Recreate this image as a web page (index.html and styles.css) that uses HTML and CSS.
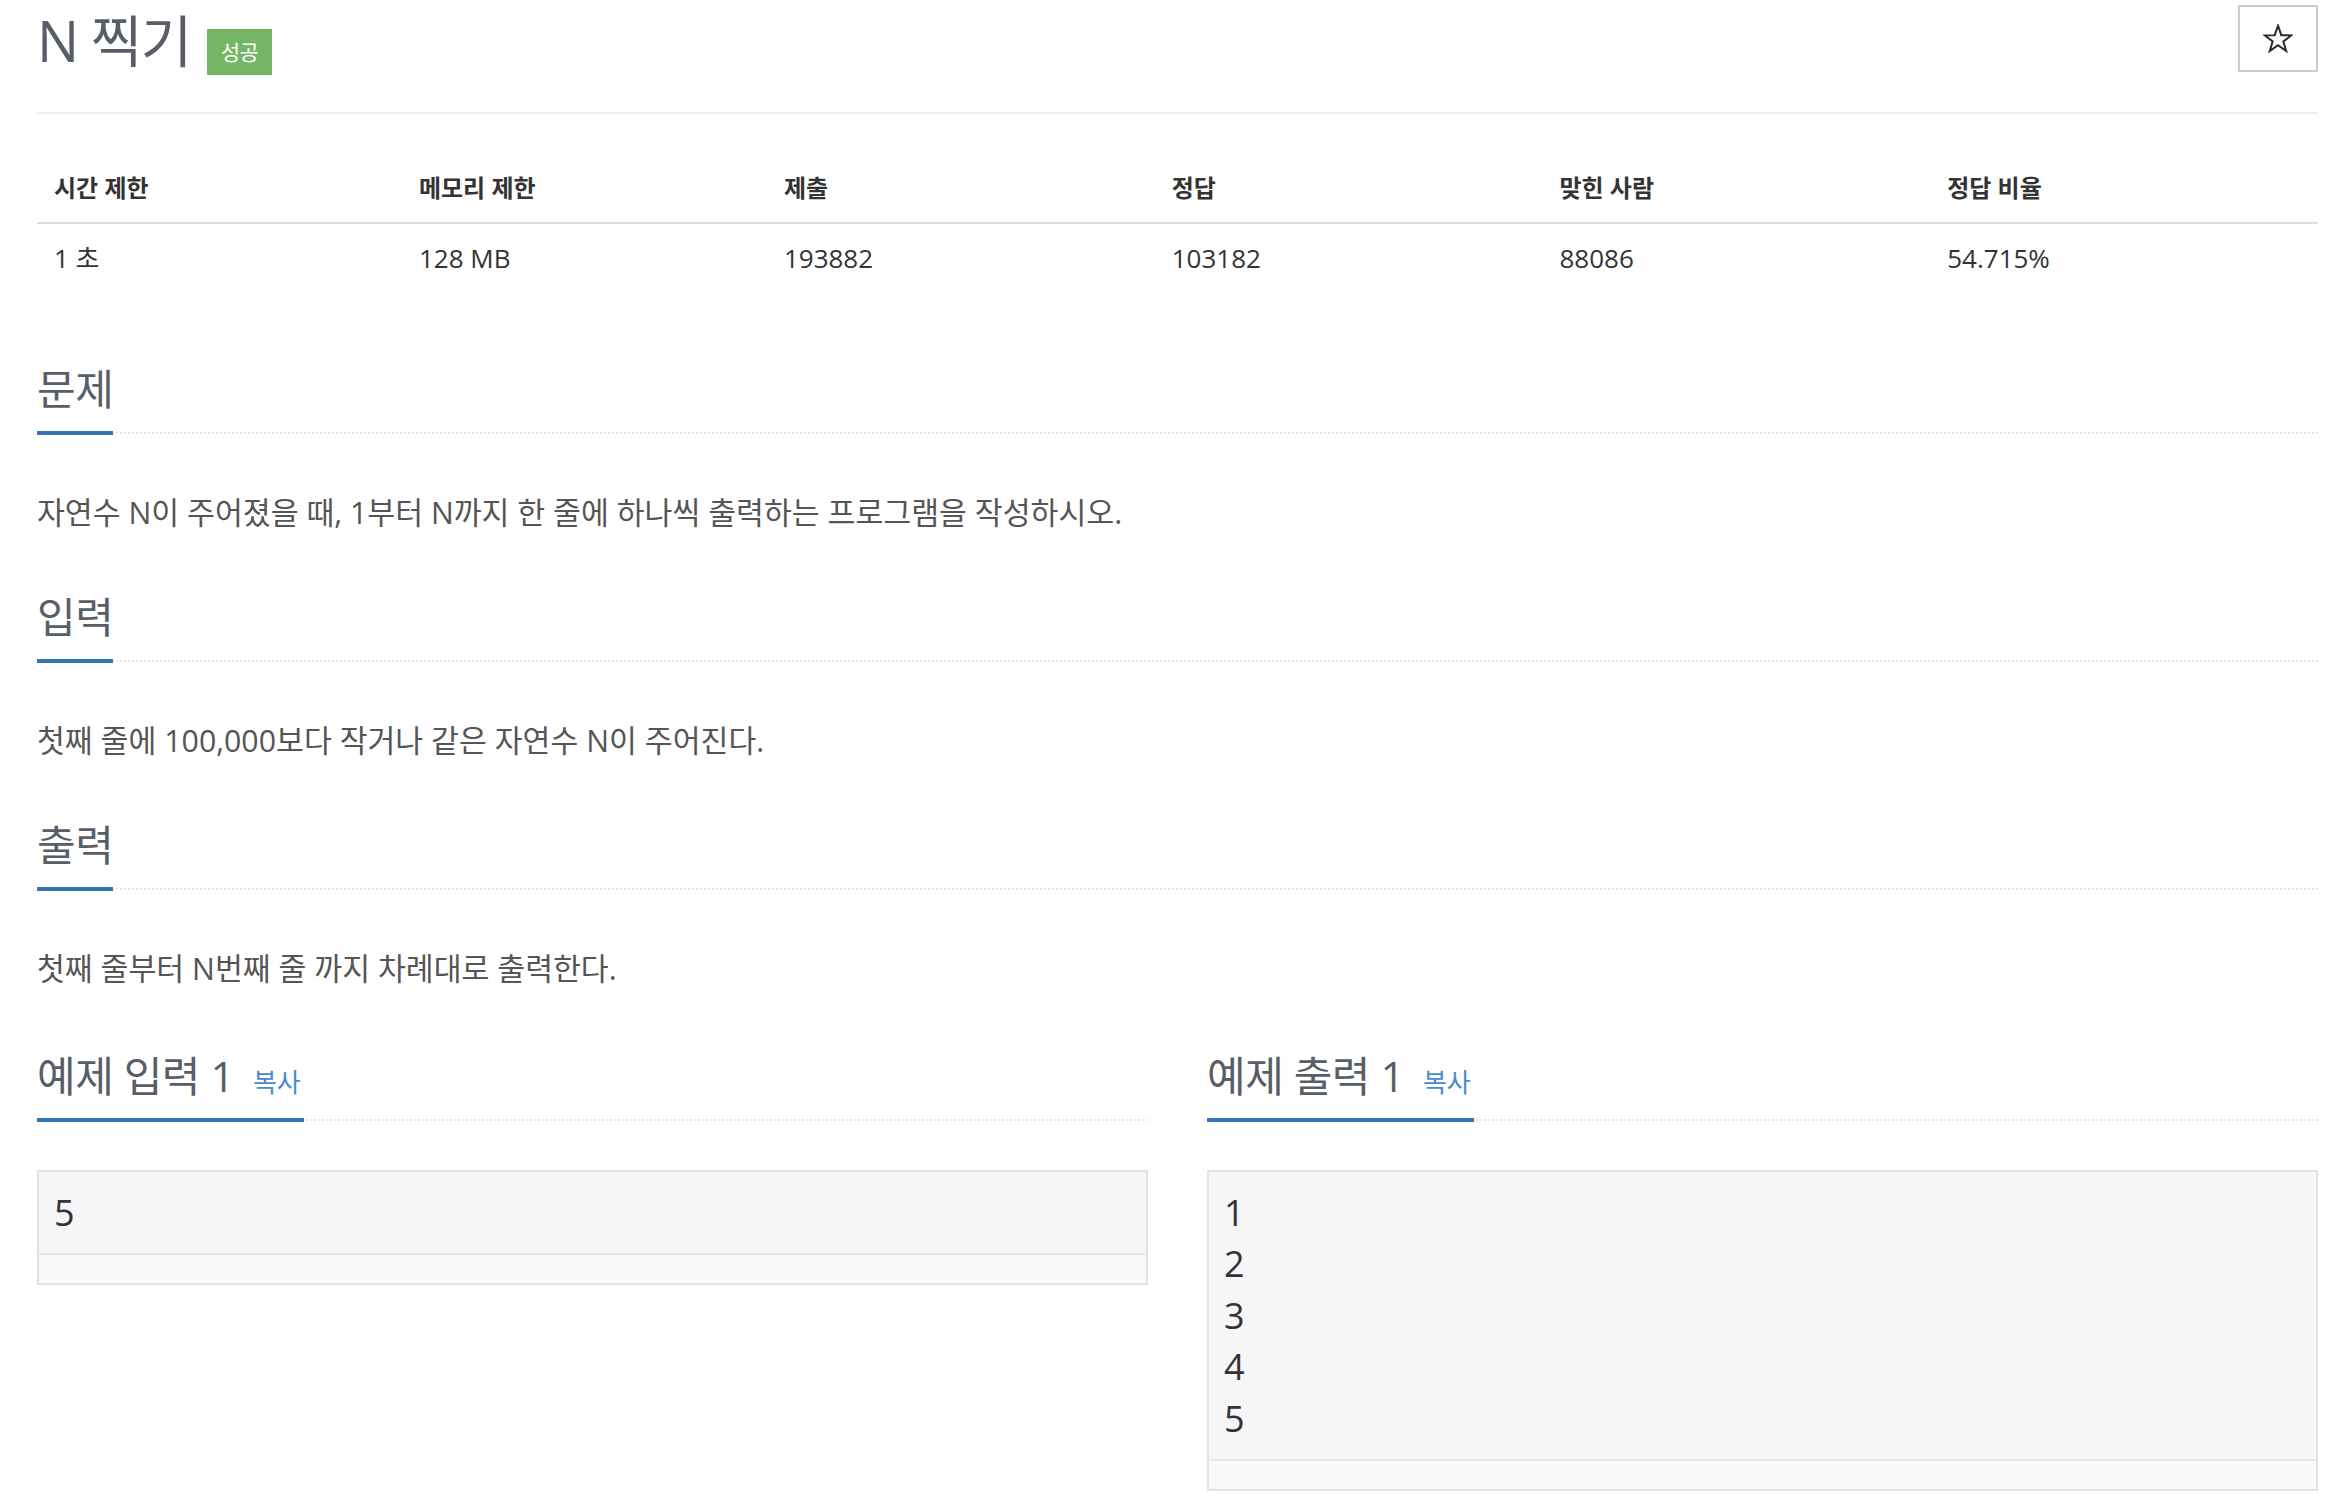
FILE: index.html
```html
<!DOCTYPE html>
<html lang="ko">
<head>
<meta charset="utf-8">
<title>N 찍기</title>
<link rel="stylesheet" href="styles.css">
</head>
<body>
<div class="container">
  <header class="page-header">
    <h1 class="title"><span class="title-text">N 찍기</span><span class="badge">성공</span></h1>
    <button class="star-btn" type="button" aria-label="즐겨찾기">
      <svg viewBox="-1 -1 30 29" width="30" height="29"><polygon points="14,0.7 17.29,10.17 27.31,10.37 19.33,16.43 22.23,26.03 14,20.3 5.77,26.03 8.67,16.43 0.69,10.37 10.71,10.17" fill="none" stroke="#2b2b2b" stroke-width="2" stroke-linejoin="miter"/></svg>
    </button>
  </header>

  <table class="info">
    <thead>
      <tr>
        <th class="c16">시간 제한</th>
        <th class="c16">메모리 제한</th>
        <th class="c17">제출</th>
        <th class="c17">정답</th>
        <th class="c17">맞힌 사람</th>
        <th class="c17">정답 비율</th>
      </tr>
    </thead>
    <tbody>
      <tr>
        <td>1 초</td>
        <td>128 MB</td>
        <td>193882</td>
        <td>103182</td>
        <td>88086</td>
        <td>54.715%</td>
      </tr>
    </tbody>
  </table>

  <section class="problem-section first">
    <div class="headline"><h3>문제</h3></div>
    <p>자연수 N이 주어졌을 때, 1부터 N까지 한 줄에 하나씩 출력하는 프로그램을 작성하시오.</p>
  </section>

  <section class="problem-section">
    <div class="headline"><h3>입력</h3></div>
    <p>첫째 줄에 100,000보다 작거나 같은 자연수 N이 주어진다.</p>
  </section>

  <section class="problem-section">
    <div class="headline"><h3>출력</h3></div>
    <p>첫째 줄부터 N번째 줄 까지 차례대로 출력한다.</p>
  </section>

  <div class="samples">
    <section class="sample-col">
      <div class="headline"><h3>예제 입력 1<a class="copy" href="#">복사</a></h3></div>
      <div class="sample"><pre>5</pre><div class="sample-foot"></div></div>
    </section>
    <section class="sample-col">
      <div class="headline"><h3>예제 출력 1<a class="copy" href="#">복사</a></h3></div>
      <div class="sample"><pre>1
2
3
4
5</pre><div class="sample-foot"></div></div>
    </section>
  </div>
</div>
</body>
</html>
```

FILE: styles.css
```css
* { box-sizing: border-box; }

html, body {
  margin: 0;
  background: #ffffff;
}

body {
  font-family: "Open Sans", "Noto Sans CJK KR", sans-serif;
  color: #333333;
}

.container {
  width: 2281px;
  margin-left: 37px;
}

/* ---------- header ---------- */
.page-header {
  display: flex;
  justify-content: space-between;
  align-items: flex-start;
  height: 114px;
  border-bottom: 2px solid #eeeeee;
}

.title {
  margin: 0;
  display: flex;
  align-items: flex-start;
  font-weight: 400;
}

.title-text {
  margin-top: 8px;
  font-size: 56px;
  line-height: 64px;
  letter-spacing: -1.5px;
  color: #585e67;
}

.badge {
  margin-top: 29px;
  margin-left: 16px;
  height: 46px;
  padding: 0 14px;
  background: #74b566;
  color: #ffffff;
  font-size: 21px;
  line-height: 46px;
  letter-spacing: -0.5px;
}

.star-btn {
  margin-top: 5px;
  width: 80px;
  height: 67px;
  padding: 0;
  border: 2px solid #cccccc;
  background: #ffffff;
  display: flex;
  align-items: center;
  justify-content: center;
}

.star-btn svg { display: block; }

/* ---------- info table ---------- */
.info {
  width: 100%;
  margin-top: 40px;
  border-collapse: collapse;
}

.info th,
.info td {
  text-align: left;
  padding: 17px 17px;
  line-height: 34px;
  color: #333333;
  white-space: nowrap;
}

.info th {
  font-size: 24px;
  font-weight: 700;
  border-bottom: 2px solid #dddddd;
}

.info td {
  font-size: 26px;
  font-weight: 400;
}

.c16 { width: 16%; }
.c17 { width: 17%; }

/* ---------- sections ---------- */
.headline {
  display: flex;
  border-bottom: 2px dotted #e2e6ee;
}

.headline h3 {
  margin: 0 0 -3px 0;
  padding: 0 0 18px 0;
  font-size: 42px;
  line-height: 48px;
  font-weight: 400;
  letter-spacing: -0.5px;
  color: #585e67;
  border-bottom: 4px solid #3274b5;
}

.problem-section .headline { margin-top: 57px; }
.problem-section.first .headline { margin-top: 73px; }

.problem-section p {
  margin: 56px 0 0 0;
  font-size: 30.3px;
  line-height: 46px;
  color: #555555;
}

/* ---------- samples ---------- */
.samples {
  display: grid;
  grid-template-columns: 1fr 1fr;
  column-gap: 59px;
  align-items: start;
  margin-top: 60px;
}

.sample-col .headline h3 { padding-right: 3px; }

.copy {
  margin-left: 19px;
  font-size: 26px;
  line-height: 1;
  letter-spacing: 0;
  color: #4a8bcf;
  text-decoration: none;
}

.sample {
  margin-top: 49px;
  border: 2px solid #e1e1e8;
  background: #f9f9fa;
}

.sample pre {
  margin: 0;
  padding: 15px 15px;
  font-family: "Open Sans", "Noto Sans CJK KR", sans-serif;
  font-size: 36px;
  line-height: 51.4px;
  color: #333333;
  background: #f6f6f8;
  border-bottom: 2px solid #e6e6ea;
}

.sample-foot {
  height: 28px;
}
```
